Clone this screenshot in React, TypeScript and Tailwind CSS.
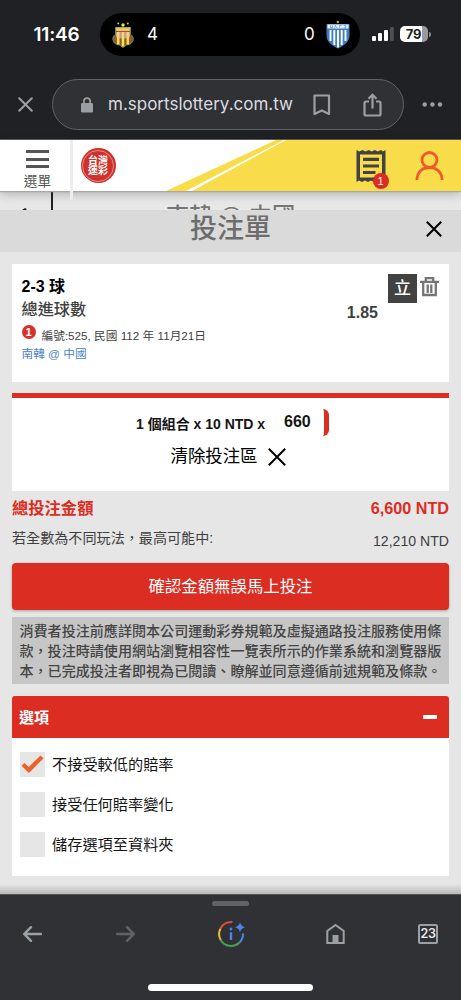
import { useState } from 'react'

interface OptionType {
  label: string
  checked: boolean
}

const App = () => {
  return (
    <div className="flex h-[1000px] w-[461px] flex-col overflow-hidden bg-[#e6e6e6] font-['Liberation_Sans','Noto_Sans_CJK_TC',sans-serif] text-[#3f3f3f]">
      <StatusBar />
      <AddressBar />
      <SiteHeader />
      <BackPage />
      <BetSlip />
      <BottomNav />
    </div>
  )
}

const StatusBar = () => {
  return (
    <div className="flex h-[69px] shrink-0 bg-[#202124] font-[Inter,sans-serif] text-white">
      <div className="w-[100px] pt-[23px] pl-[33.500px] text-[19px] leading-[23px] font-semibold tracking-[-0.2px]">11:46</div>
      <div className="mt-[13px] flex h-[43px] w-[260px] items-center rounded-full bg-black text-[17px]">
        <svg className="ml-[11px]" width="24" height="28" viewBox="0 0 24 28">
          <circle cx="12" cy="4" r="1.7" fill="#f3e43a" />
          <circle cx="7.3" cy="2.6" r="1" fill="#d9cf45" />
          <circle cx="16.8" cy="2.6" r="1" fill="#d9cf45" />
          <path
            d="M4.500 6.500h15v7c3 1.500 3.500 5 1.800 7.500-1.500 2.500-4 2.700-5.800 3L12 26.500 8.500 24c-2 0-4.500-.8-5.700-3-1.500-2.500-1.300-6 1.700-7.500z"
            fill="#b5443a"
            stroke="#4f9a4b"
            strokeWidth="1"
          />
          <path d="M7.200 11v12.500M12 11v14.500M16.800 11v12.500" stroke="#f0e64a" strokeWidth="2.600" />
          <path d="M4.500 14v8M9.600 11v13M14.400 11v13M19.500 14v8" stroke="#4f7a35" strokeWidth=".6" />
          <path d="M5 11h14v5q-7 3-14 0z" fill="#f0c8b0" opacity=".6" />
          <path d="M4.500 6.500h15L18.500 10h-13z" fill="#e8c860" />
        </svg>
        <span className="ml-[12px] w-[157px]">4</span>
        <span className="w-[20px]">0</span>
        <svg className="ml-[1px]" width="26" height="30" viewBox="0 0 26 30">
          <circle cx="12.800" cy="2" r="1.200" fill="#c9b52c" />
          <path d="M1.500 4h23v11c0 6-4 10-11.500 13.500C5.500 25 1.500 21 1.500 15z" fill="#3f7dbd" />
          <path d="M5.500 10v11M9.300 10v15M13 10v17.500M16.700 10v15M20.500 10v11" stroke="#fff" strokeWidth="1.900" />
          <path d="M2.500 4.500h21v4h-21z" fill="#e6f0fa" />
          <path d="M5.500 5.300v2.500h2v-2.500M9.500 7.800l1-2.500 1 2.500M14.500 5.500v2.300M14.500 5.500h2M18.800 5.500h2v2.200h-2" fill="none" stroke="#4f86bd" strokeWidth=".7" />
        </svg>
      </div>
      <svg className="mt-[26px] ml-[12px]" width="22" height="16" viewBox="0 0 22 16">
        <rect x="0" y="10" width="4" height="5" rx="1" fill="#fff" />
        <rect x="6" y="7" width="4" height="8" rx="1" fill="#fff" />
        <rect x="12" y="4" width="4" height="11" rx="1" fill="#fff" />
        <rect x="18" y="1" width="3.800" height="14" rx="1" fill="#4f5053" />
      </svg>
      <div className="mt-[26px] ml-[6px] flex h-[16px] items-center">
        <div className="flex h-[16px] w-[28px] items-center justify-center rounded-[5px] bg-[linear-gradient(to_right,#fff_79%,#9a9a9c_79%)] pr-px text-[13px] leading-none font-bold tracking-[-0.3px] text-[#202124]">
          79
        </div>
        <div className="ml-px h-[5px] w-[1.500px] rounded-r bg-[#8c8d90]" />
      </div>
    </div>
  )
}

const AddressBar = () => {
  return (
    <div className="flex h-[71px] shrink-0 items-start border-b border-[#5c5d60] bg-[#202124] pt-[10px]">
      <svg className="mt-[18px] ml-[18px]" width="15" height="15" viewBox="0 0 15 15">
        <path d="M1.200 1.200l12.600 12.600M13.800 1.200L1.200 13.800" stroke="#9aa0a6" strokeWidth="2" strokeLinecap="round" />
      </svg>
      <div className="ml-[19px] flex h-[51px] w-[352px] items-center rounded-full border border-[#5f6368] bg-[#303134]">
        <svg className="ml-[28px]" width="12" height="16" viewBox="0 0 12 16">
          <rect x="0" y="6" width="12" height="9.500" rx="1.200" fill="#9aa0a6" />
          <path d="M2.900 7V4.200a3.100 3.100 0 0 1 6.200 0V7" fill="none" stroke="#9aa0a6" strokeWidth="1.700" />
        </svg>
        <span className="ml-[15px] w-[205px] font-[Inter,sans-serif] text-[17px] whitespace-nowrap text-[#dadce0]">
          m.sportslottery.com.tw
        </span>
        <svg width="18" height="22" viewBox="0 0 18 22">
          <path d="M1.500 1.500h14.500v18.500l-7.250-3.500-7.250 3.500z" fill="none" stroke="#9aa0a6" strokeWidth="2.200" strokeLinejoin="round" />
        </svg>
        <svg className="ml-[32px]" width="20" height="24" viewBox="0 0 20 24">
          <path
            d="M6 8.500H3a1.500 1.500 0 0 0-1.500 1.500v11A1.500 1.500 0 0 0 3 22.500h13a1.500 1.500 0 0 0 1.500-1.500V10A1.500 1.500 0 0 0 16 8.500h-3M9.500 15.500V1.800M5.500 5.700l4-4 4 4"
            fill="none"
            stroke="#9aa0a6"
            strokeWidth="2.200"
          />
        </svg>
      </div>
      <svg className="mt-[23px] ml-[18px]" width="22" height="5" viewBox="0 0 22 5">
        <circle cx="2.700" cy="2.500" r="2.200" fill="#9aa0a6" />
        <circle cx="10.400" cy="2.500" r="2.200" fill="#9aa0a6" />
        <circle cx="18" cy="2.500" r="2.200" fill="#9aa0a6" />
      </svg>
    </div>
  )
}

const SiteHeader = () => {
  return (
    <div className="relative z-10 h-[51px] shrink-0 bg-white shadow-[0_1px_1px_#a8a8a8,0_3px_10px_rgba(0,0,0,0.25)]">
      <svg className="absolute top-0 left-0" width="461" height="51" viewBox="0 0 461 51">
        <path d="M166 51L276 0h185v51z" fill="#f8dc49" />
        <path d="M186 51L284 0h2L192 51z" fill="#fff" />
      </svg>
      <div className="relative flex items-start">
        <div className="flex w-[70px] flex-col items-center pt-[10px] pl-[5px]">
          <div className="flex h-[18px] w-[23px] flex-col justify-between">
            <div className="h-[3px] bg-[#555]" />
            <div className="h-[3px] bg-[#555]" />
            <div className="h-[3px] bg-[#555]" />
          </div>
          <span className="mt-[6px] text-[13.700px] leading-[16px] text-[#555]">選單</span>
        </div>
        <div className="h-[60px] w-[2.500px] bg-[#ededed]" />
        <div className="mt-[8px] ml-[8px] flex size-[35px] items-center justify-center rounded-full bg-[#cf312c] p-[1px]">
          <div className="flex size-[32px] items-center justify-center rounded-full border border-[#e58a87] text-center text-[10px] leading-[9.500px] font-bold text-white">
            台灣
            <br />
            運彩
          </div>
        </div>
        <div className="relative mt-[10px] ml-[240px] h-[40px] w-[34px]">
          <svg width="30" height="32" viewBox="0 0 30 32">
            <path
              d="M.5 0l2.800 1.600L6.500 0l3 1.600L12.700 0l3 1.600L18.900 0l3 1.600L25 0l2 1.600L29.500 0v32l-2.500-1.500-3 1.500-3-1.500-3 1.500-3-1.500-3 1.500-3-1.500-3 1.500-3-1.500L.5 32z"
              fill="#424242"
            />
            <path d="M4 4.500h22v23H4z" fill="#f8dc49" />
            <path d="M7 9.300h16M7 16h16M7 22.500h12.500" stroke="#424242" strokeWidth="3.200" />
          </svg>
          <span className="absolute top-[23px] left-[17px] flex size-[16px] items-center justify-center rounded-full bg-[#dc2d22] text-[11px] leading-none text-white">
            1
          </span>
        </div>
        <svg className="mt-[11px] ml-[25px]" width="30" height="30" viewBox="0 0 30 30">
          <circle cx="14.500" cy="9" r="7.500" fill="none" stroke="#ee5a29" strokeWidth="2.800" />
          <path d="M1.900 29C2 21.500 7 16.500 14.500 16.500S27 21.500 27.100 29" fill="none" stroke="#ee5a29" strokeWidth="2.800" />
        </svg>
      </div>
    </div>
  )
}

// page title that peeks out between the header and the slip
const BackPage = () => {
  return (
    <div className="flex h-[19px] shrink-0 items-start overflow-hidden bg-[#e8e8e8]">
      <div className="flex h-[19px] w-[53px] items-end border-r-2 border-[#222] pl-[22px]">
        <svg width="5" height="2" viewBox="0 0 5 2">
          <path d="M0 2l3-2 1.500 1v1z" fill="#222" />
        </svg>
      </div>
      <div className="ml-[113px] pt-[11px] text-[23.200px] leading-[28px] font-medium whitespace-nowrap text-[#757575]">南韓 @ 中國</div>
    </div>
  )
}

const BetSlip = () => {
  return (
    <div className="flex h-[684px] shrink-0 flex-col">
      <div className="flex h-[42px] shrink-0 items-center justify-end bg-[#dadada] pr-[19px]">
        <span className="mr-[155px] pb-[4px] text-[27px] leading-[36px] font-medium text-[#6c6c6c]">投注單</span>
        <svg className="mb-[4px]" width="16" height="16" viewBox="0 0 16 16">
          <path d="M.8.8l14.400 14.400M15.200.8L.8 15.200" stroke="#000" strokeWidth="2" />
        </svg>
      </div>
      <div className="flex flex-col px-[12px] pt-[12px]">
        <BetCard />
        <StakeCard />
        <Totals />
        <button className="mt-[10px] h-[47px] rounded bg-[#dc2d22] text-[16.400px] text-white shadow-[0_1px_3px_rgba(0,0,0,0.3)]">確認金額無誤馬上投注</button>
        <div className="mt-[7px] h-[67px] bg-[#c6c6c6] pt-[4px] pl-[7.500px] text-[14.070px] leading-[20px] font-medium whitespace-nowrap text-[#444]">
          消費者投注前應詳閱本公司運動彩券規範及虛擬通路投注服務使用條
          <br />
          款，投注時請使用網站瀏覽相容性一覽表所示的作業系統和瀏覽器版
          <br />
          本，已完成投注者即視為已閱讀、瞭解並同意遵循前述規範及條款。
        </div>
        <Options />
      </div>
      <div className="mt-auto h-[10px] shrink-0 bg-linear-to-b from-transparent to-black/20" />
    </div>
  )
}

const BetCard = () => {
  return (
    <div className="flex h-[118px] justify-between bg-white">
      <div className="flex flex-col pl-[9.500px]">
        <span className="mt-[11px] text-[16px] leading-[23px] font-bold text-black">2-3 球</span>
        <span className="text-[16.200px] leading-[23px] font-medium">總進球數</span>
        <div className="mt-[3px] flex h-[20px] items-center text-[11.700px]">
          <span className="mb-[4px] flex size-[14px] items-center justify-center rounded-full bg-[#d7312a] text-[11px] leading-none font-bold text-white">
            1
          </span>
          <span className="ml-[6px] pt-[3px] whitespace-nowrap">編號:525, 民國 112 年 11月21日</span>
        </div>
        <span className="mt-px text-[11.700px] leading-[17px] text-[#4a83c5]">南韓 @ 中國</span>
      </div>
      <div className="flex pt-[10px] pr-[10px]">
        <span className="mt-[29px] mr-[10px] text-[16px] leading-[20px] font-bold">1.85</span>
        <div className="flex h-[29px] w-[29px] items-center justify-center bg-[#424242] text-[17px] leading-none font-medium text-white">立</div>
        <svg className="mt-[3px] ml-[3px]" width="19" height="20" viewBox="0 0 19 20">
          <path d="M0 4.800h19M5.800 4V1h7.400v3M3.200 5v13h12.600V5M7.700 7.500v8.500M11.300 7.500v8.500" fill="none" stroke="#757575" strokeWidth="2.300" />
        </svg>
      </div>
    </div>
  )
}

const StakeCard = () => {
  return (
    <div className="mt-[11px] flex h-[98px] flex-col border-t-[5px] border-[#dc2d22] bg-white text-[#151515]">
      <div className="mt-[11px] flex h-[27px] items-center pl-[124px]">
        <span className="w-[134px] pt-[4px] text-[14px] font-bold whitespace-nowrap">1 個組合 x 10 NTD x</span>
        <div className="h-[27px] w-[59px] rounded-[6px] border-r-[5px] border-[#dc2d22] bg-white pl-[14px] text-[16px] leading-[26px] font-bold">
          660
        </div>
      </div>
      <div className="mt-[8px] flex h-[25px] items-center pl-[158.500px]">
        <span className="text-[17.400px] text-black">清除投注區</span>
        <svg className="ml-[11px]" width="18" height="18" viewBox="0 0 18 18">
          <path d="M.8.8l16.400 16.400M17.200.8L.8 17.200" stroke="#000" strokeWidth="2" />
        </svg>
      </div>
    </div>
  )
}

const Totals = () => {
  return (
    <div className="flex h-[62px] flex-col pt-[5px]">
      <div className="flex h-[24px] items-center justify-between font-bold text-[#dc2d22]">
        <span className="text-[16.300px]">總投注金額</span>
        <span className="text-[16.200px]">6,600 NTD</span>
      </div>
      <div className="mt-[6px] flex h-[24px] justify-between text-[14.100px] leading-[24px]">
        <span>若全數為不同玩法，最高可能中:</span>
        <span className="pt-[3px]">12,210 NTD</span>
      </div>
    </div>
  )
}

const Options = () => {
  const [options, setOptions] = useState<Array<OptionType>>([
    { label: '不接受較低的賠率', checked: true },
    { label: '接受任何賠率變化', checked: false },
    { label: '儲存選項至資料夾', checked: false },
  ])

  const toggle = (label: string) => {
    setOptions(options.map(option => (option.label === label ? { ...option, checked: !option.checked } : option)))
  }

  const renderOptions = options.map(option => (
    <div key={option.label} className="flex h-[25px] items-center gap-[7px]" onClick={() => toggle(option.label)}>
      <div className="size-[25px] bg-[#e6e6e6]">
        {option.checked && (
          <svg width="25" height="25" viewBox="0 0 25 25">
            <path d="M1.500 13.700l3-2.700 4.300 4L20.500 3.500l3 2.800L9 21z" fill="#ee5f29" />
          </svg>
        )}
      </div>
      <span className="pt-[2px] text-[15.200px] text-[#151515]">{option.label}</span>
    </div>
  ))

  return (
    <div className="mt-[12px] flex flex-col">
      <div className="flex h-[42px] items-center justify-between rounded-t-[3px] bg-[#dc2d22] pr-[12px] pl-[7px] text-[15px] font-bold text-white">
        <span className="pt-[2px]">選項</span>
        <div className="h-[4px] w-[14px] rounded-[1px] bg-white" />
      </div>
      <div className="flex h-[138px] flex-col gap-[15px] bg-white pt-[14px] pl-[8px]">{renderOptions}</div>
    </div>
  )
}

const BottomNav = () => {
  return (
    <div className="flex h-[106px] shrink-0 flex-col border-t border-[#55565a] bg-[#303134]">
      <div className="mt-[6px] ml-[212px] h-[5px] w-[37px] rounded-full bg-[#5f6368]" />
      <div className="mt-[12px] flex h-[32px] items-center">
        <svg className="ml-[23px]" width="19" height="16" viewBox="0 0 19 16">
          <path d="M18 8H1.500M8 1.200L1.300 8 8 14.800" fill="none" stroke="#9aa0a6" strokeWidth="2.400" strokeLinecap="round" />
        </svg>
        <svg className="ml-[74px]" width="19" height="16" viewBox="0 0 19 16">
          <path d="M1 8h16.500M11 1.200L17.700 8 11 14.800" fill="none" stroke="#5f6368" strokeWidth="2.400" strokeLinecap="round" />
        </svg>
        <svg className="ml-[82px]" width="29" height="28" viewBox="0 0 29 28">
          <g fill="none" strokeWidth="2">
            <path d="M3.400 8.700A12 12 0 0 1 15.500 2.100" stroke="#d9503f" />
            <path d="M3.700 20A12 12 0 0 1 3.400 8.700" stroke="#f0b93a" />
            <path d="M22.500 22.500A12 12 0 0 1 3.700 20" stroke="#4a9f56" />
            <path d="M26 13.500A12 12 0 0 1 22.500 22.500" stroke="#4c84ec" />
          </g>
          <rect x="12.800" y="12.300" width="2.400" height="7.700" fill="#4c84ec" />
          <circle cx="14" cy="9" r="1.400" fill="#4c84ec" />
          <path d="M23 2.300q.9 4 5 4.900-4.100.9-5 5-.9-4.100-5-5 4.100-.9 5-4.900z" fill="#4c84ec" />
        </svg>
        <svg className="ml-[80px]" width="19" height="22" viewBox="0 0 19 22">
          <path d="M1.300 20V8L9.500 2l8.200 6v12z" fill="none" stroke="#9aa0a6" strokeWidth="2" />
          <path d="M6.500 12h6v8.500h-6z" fill="#9aa0a6" />
        </svg>
        <div className="ml-[73px] flex size-[20px] items-center justify-center rounded-[2px] border-2 border-[#9aa0a6] font-[Inter,sans-serif] text-[12.500px] leading-none font-semibold tracking-[-0.4px] text-[#e8eaed]">
          23
        </div>
      </div>
      <div className="mt-[34px] ml-[148px] h-[7px] w-[165px] rounded-full bg-white" />
    </div>
  )
}

export default App
